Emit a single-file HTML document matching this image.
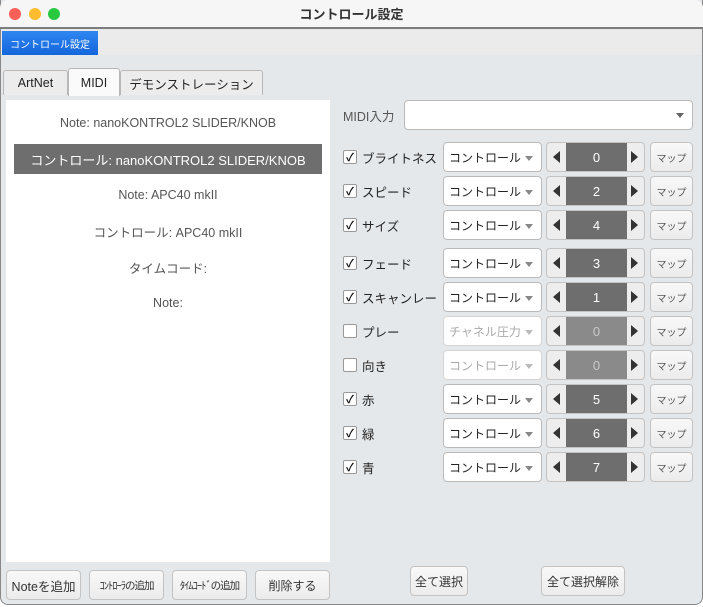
<!DOCTYPE html>
<html><head><meta charset="utf-8"><style>
*{box-sizing:border-box;margin:0;padding:0}
body{width:703px;height:607px;overflow:hidden;background:#fff;font-family:"Liberation Sans","Noto Sans CJK JP",sans-serif;position:relative}
.a{position:absolute}
.f{display:flex;align-items:center;justify-content:center;white-space:nowrap}
.win{left:0;top:0;width:703px;height:605px;background:#e5e8eb;border:1px solid #888;border-top:none;border-radius:0 0 8px 8px}
.title{left:0;top:0;width:703px;height:29px;background:#f6f6f6;border-bottom:2px solid #7d7d7d;font-weight:bold;font-size:13px;color:#333;border-radius:8px 8px 0 0}
.dot{top:8px;width:12px;height:12px;border-radius:50%}
.strip{left:1px;top:30px;width:700px;height:25px;background:#ebebeb}
.blue{left:2px;top:31px;width:96px;height:24px;background:linear-gradient(#2f86f0,#1466dc);color:#fff;font-size:10px}
.tab{top:70px;height:25px;background:#ececec;border:1px solid #b8b8b8;border-bottom:none;border-radius:3px 3px 0 0;font-size:12.5px;color:#222}
.panel{left:6px;top:100px;width:324px;height:462px;background:#fff}
.li{left:6px;width:324px;height:20px;font-size:12.5px;color:#555}
.sel{left:14px;top:144px;width:308px;height:30px;background:#6e6e6e;color:#fff;font-size:13px}
.btn{background:linear-gradient(#f8f8f8,#ececec);border:1px solid #c3c3c3;border-radius:4px;font-size:12px;color:#333}
.cb{left:343px;width:14px;height:14px;border:1px solid #999;background:#fff;border-radius:2px;font-size:11px;color:#111;font-weight:bold}
.lab{left:362px;height:20px;font-size:12.5px;color:#222;width:79px;overflow:hidden;justify-content:flex-start}
.combo{left:443px;width:99px;height:30px;background:#fff;border:1px solid #bbb;border-radius:4px;font-size:12px;padding-left:5px;color:#222;justify-content:flex-start}
.combo i{position:absolute;right:8px;top:13px;border:4px solid transparent;border-top:5px solid #888;border-bottom:none}
.spin{left:546px;width:99px;height:30px;background:#ededed;border:1px solid #c3c3c3;border-radius:4px}
.spin .m{position:absolute;left:19px;top:0;width:61px;height:28px;background:#6e6e6e;color:#fff;font-size:13px}
.spin .l{position:absolute;left:6px;top:8px;border:6px solid transparent;border-right:7px solid #333;border-left:none}
.spin .r{position:absolute;right:6px;top:8px;border:6px solid transparent;border-left:7px solid #333;border-right:none}
.map{left:650px;width:43px;height:30px;font-size:10px;color:#555}
.dis{color:#aaa}
.dis .m{background:#8a8a8a;color:#c8c8c8}
</style></head><body>
<div class="a win"></div>
<div class="a title f">コントロール設定</div>
<div class="a dot" style="left:9px;background:#fe5f57"></div>
<div class="a dot" style="left:29px;background:#febc2e"></div>
<div class="a dot" style="left:48px;background:#28c840"></div>
<div class="a strip"></div>
<div class="a blue f">コントロール設定</div>
<div class="a tab f" style="left:3px;width:65px">ArtNet</div>
<div class="a tab f" style="left:68px;width:52px;top:68px;height:28px;background:#fafafa;z-index:2">MIDI</div>
<div class="a tab f" style="left:120px;width:143px">デモンストレーション</div>
<div class="a panel"></div>
<div class="a li f" style="top:113px">Note: nanoKONTROL2 SLIDER/KNOB</div>
<div class="a sel f">コントロール: nanoKONTROL2 SLIDER/KNOB</div>
<div class="a li f" style="top:185px">Note: APC40 mkII</div>
<div class="a li f" style="top:221px">コントロール: APC40 mkII</div>
<div class="a li f" style="top:257px">タイムコード:</div>
<div class="a li f" style="top:293px">Note:</div>
<div class="a btn f" style="left:6px;top:570px;width:75px;height:30px;font-size:12.5px">Noteを追加</div>
<div class="a btn f" style="left:89px;top:570px;width:75px;height:30px;font-size:10.5px;letter-spacing:-1px">ｺﾝﾄﾛｰﾗの追加</div>
<div class="a btn f" style="left:172px;top:570px;width:75px;height:30px;font-size:10.5px;letter-spacing:-1px">ﾀｲﾑｺｰﾄﾞの追加</div>
<div class="a btn f" style="left:255px;top:570px;width:75px;height:30px">削除する</div>
<div class="a btn f" style="left:410px;top:566px;width:58px;height:30px">全て選択</div>
<div class="a btn f" style="left:541px;top:566px;width:84px;height:30px">全て選択解除</div>
<div class="a f" style="left:343px;top:105px;height:20px;font-size:12.5px;color:#555">MIDI入力</div>
<div class="a" style="left:404px;top:100px;width:289px;height:30px;background:#fff;border:1px solid #bbb;border-radius:4px"><i style="position:absolute;right:8px;top:12px;border:4px solid transparent;border-top:5px solid #666;border-bottom:none"></i></div>

<div class="a cb f" style="top:150px">✓</div><div class="a lab f" style="top:147px">ブライトネス</div>
<div class="a combo f" style="top:142px">コントロール<i></i></div><div class="a spin" style="top:142px"><span class="l"></span><div class="m f">0</div><span class="r"></span></div><div class="a btn map f" style="top:142px">マップ</div>

<div class="a cb f" style="top:184px">✓</div><div class="a lab f" style="top:181px">スピード</div>
<div class="a combo f" style="top:176px">コントロール<i></i></div><div class="a spin" style="top:176px"><span class="l"></span><div class="m f">2</div><span class="r"></span></div><div class="a btn map f" style="top:176px">マップ</div>

<div class="a cb f" style="top:218px">✓</div><div class="a lab f" style="top:215px">サイズ</div>
<div class="a combo f" style="top:210px">コントロール<i></i></div><div class="a spin" style="top:210px"><span class="l"></span><div class="m f">4</div><span class="r"></span></div><div class="a btn map f" style="top:210px">マップ</div>

<div class="a cb f" style="top:256px">✓</div><div class="a lab f" style="top:253px">フェード</div>
<div class="a combo f" style="top:248px">コントロール<i></i></div><div class="a spin" style="top:248px"><span class="l"></span><div class="m f">3</div><span class="r"></span></div><div class="a btn map f" style="top:248px">マップ</div>

<div class="a cb f" style="top:290px">✓</div><div class="a lab f" style="top:287px">スキャンレート</div>
<div class="a combo f" style="top:282px">コントロール<i></i></div><div class="a spin" style="top:282px"><span class="l"></span><div class="m f">1</div><span class="r"></span></div><div class="a btn map f" style="top:282px">マップ</div>

<div class="a cb f" style="top:324px"></div><div class="a lab f" style="top:321px">プレー</div>
<div class="a combo f dis" style="top:316px;border-color:#d4d4d4">チャネル圧力<i style="border-top-color:#bbb"></i></div><div class="a spin dis" style="top:316px"><span class="l"></span><div class="m f">0</div><span class="r"></span></div><div class="a btn map f" style="top:316px">マップ</div>

<div class="a cb f" style="top:358px"></div><div class="a lab f" style="top:355px">向き</div>
<div class="a combo f dis" style="top:350px;border-color:#d4d4d4">コントロール<i style="border-top-color:#bbb"></i></div><div class="a spin dis" style="top:350px"><span class="l"></span><div class="m f">0</div><span class="r"></span></div><div class="a btn map f" style="top:350px">マップ</div>

<div class="a cb f" style="top:392px">✓</div><div class="a lab f" style="top:389px">赤</div>
<div class="a combo f" style="top:384px">コントロール<i></i></div><div class="a spin" style="top:384px"><span class="l"></span><div class="m f">5</div><span class="r"></span></div><div class="a btn map f" style="top:384px">マップ</div>

<div class="a cb f" style="top:426px">✓</div><div class="a lab f" style="top:423px">緑</div>
<div class="a combo f" style="top:418px">コントロール<i></i></div><div class="a spin" style="top:418px"><span class="l"></span><div class="m f">6</div><span class="r"></span></div><div class="a btn map f" style="top:418px">マップ</div>

<div class="a cb f" style="top:460px">✓</div><div class="a lab f" style="top:457px">青</div>
<div class="a combo f" style="top:452px">コントロール<i></i></div><div class="a spin" style="top:452px"><span class="l"></span><div class="m f">7</div><span class="r"></span></div><div class="a btn map f" style="top:452px">マップ</div>
</body></html>
